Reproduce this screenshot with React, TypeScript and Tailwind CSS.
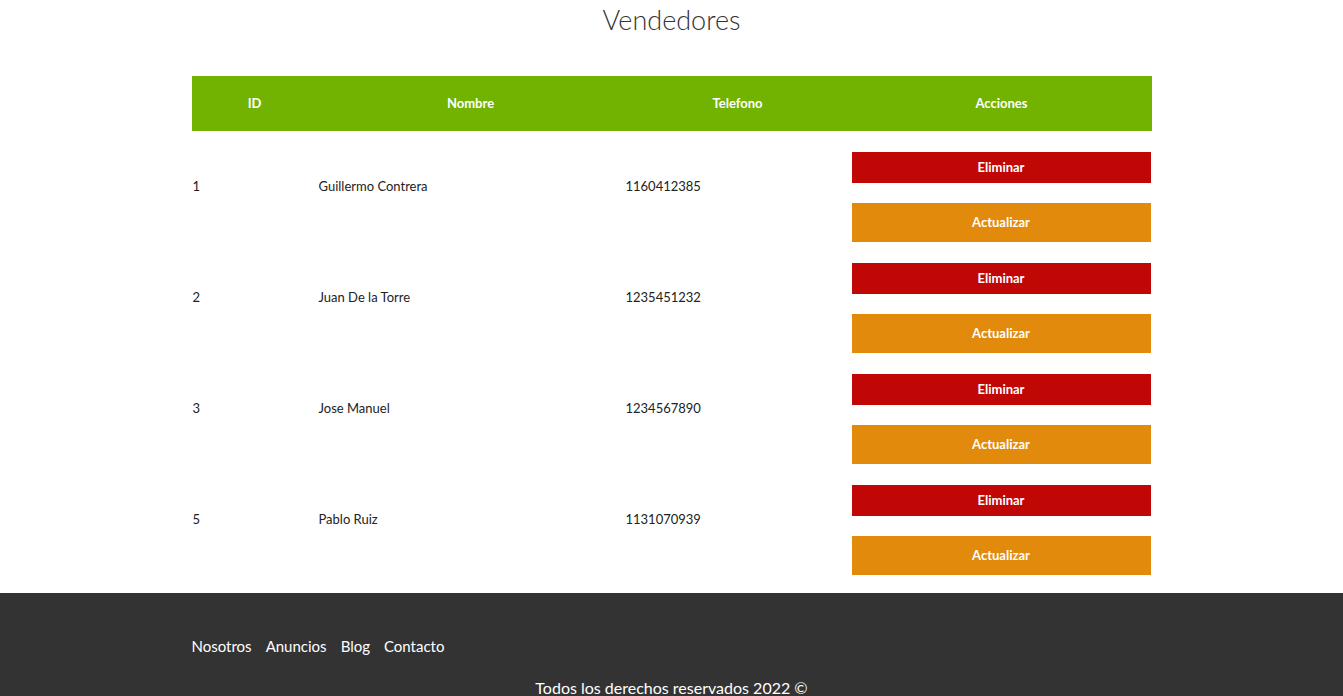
const vendedores = [
  { id: 1, nombre: "Guillermo Contrera", telefono: "1160412385" },
  { id: 2, nombre: "Juan De la Torre", telefono: "1235451232" },
  { id: 3, nombre: "Jose Manuel", telefono: "1234567890" },
  { id: 5, nombre: "Pablo Ruiz", telefono: "1131070939" },
];

export default function App() {
  return (
    <div className="min-h-screen bg-white font-['Lato','Liberation_Sans',sans-serif] text-[#222]">
      <main className="mx-auto w-[960px]">
        <h1 className="pt-[3px] text-center text-[27px] font-light leading-[34px] text-[#333]">
          Vendedores
        </h1>

        <table className="mt-[39px] mb-[8px] w-full table-fixed border-collapse text-[13px]">
          <colgroup>
            <col className="w-[126px]" />
            <col className="w-[306px]" />
            <col className="w-[228px]" />
            <col className="w-[300px]" />
          </colgroup>
          <thead className="bg-[#71b300] text-white">
            <tr className="h-[55px]">
              <th className="font-bold">ID</th>
              <th className="font-bold">Nombre</th>
              <th className="font-bold">Telefono</th>
              <th className="font-bold">Acciones</th>
            </tr>
          </thead>
          <tbody>
            {vendedores.map((v, i) => (
              <tr key={v.id}>
                <td className={`${i === 0 ? "pt-[21px]" : "pt-[11px]"} pb-[30px] pl-px`}>
                  {v.id}
                </td>
                <td className={`${i === 0 ? "pt-[21px]" : "pt-[11px]"} pb-[30px] pl-px`}>
                  {v.nombre}
                </td>
                <td className={`${i === 0 ? "pt-[21px]" : "pt-[11px]"} pb-[30px] pl-[2px]`}>
                  {v.telefono}
                </td>
                <td className={`${i === 0 ? "pt-[21px]" : "pt-[11px]"} pb-[10px] pr-px`}>
                  <div className="flex flex-col gap-[20px]">
                    <button className="h-[31px] w-full bg-[#c10606] font-bold text-white">
                      Eliminar
                    </button>
                    <button className="h-[39px] w-full bg-[#e18a0b] font-bold text-white">
                      Actualizar
                    </button>
                  </div>
                </td>
              </tr>
            ))}
          </tbody>
        </table>
      </main>

      <footer className="bg-[#333] pt-[42px] pb-[20px] text-white">
        <nav className="mx-auto flex w-[960px] gap-[14px] text-[15px] leading-[22px]">
          <a href="#">Nosotros</a>
          <a href="#">Anuncios</a>
          <a href="#">Blog</a>
          <a href="#">Contacto</a>
        </nav>
        <p className="mt-[20px] text-center text-[16px] leading-[22px]">
          Todos los derechos reservados 2022 ©
        </p>
      </footer>
    </div>
  );
}
